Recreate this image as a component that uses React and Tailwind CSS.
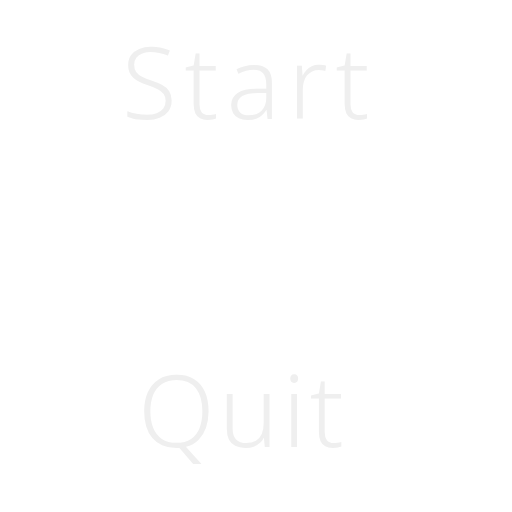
export default function App() {
  return (
    <div className="w-[512px] h-[512px] bg-white flex flex-col items-start" style={{ fontFamily: '"Noto Sans", sans-serif' }}>
      <div className="mt-[10px] ml-[122px] text-[100px] leading-[140px] font-light tracking-[8px] text-[#efefef]">Start</div>
      <div className="mt-[188px] ml-[138px] text-[100px] leading-[140px] font-light tracking-[4px] text-[#efefef]">Quit</div>
    </div>
  );
}
